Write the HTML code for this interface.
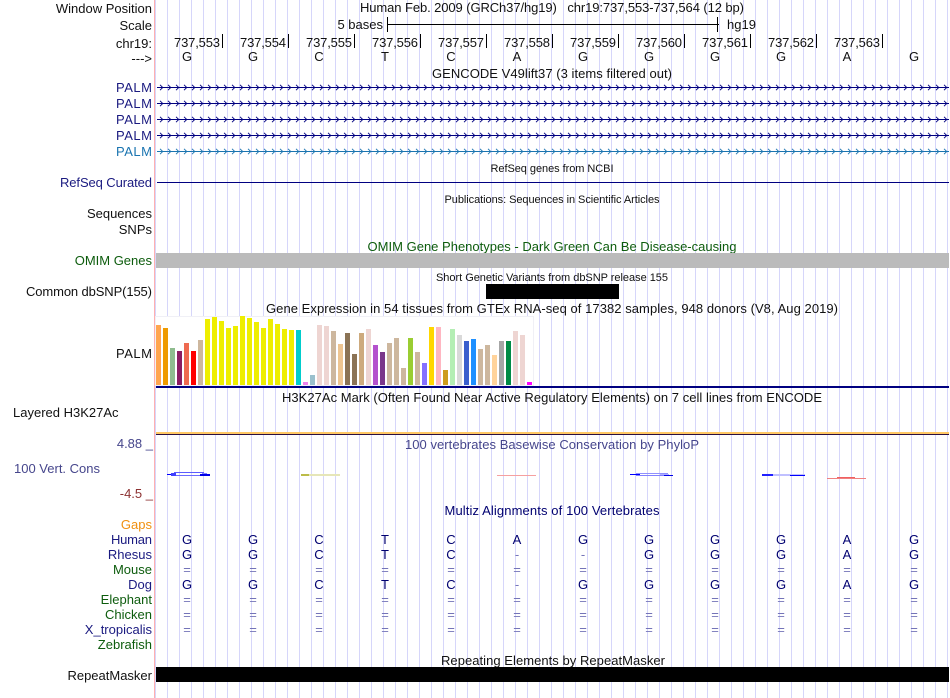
<!DOCTYPE html>
<html>
<head>
<meta charset="utf-8">
<title>Genome Browser</title>
<style>
html,body{margin:0;padding:0;background:#fff;}
body{width:950px;height:698px;overflow:hidden;}
svg{display:block;font-family:"Liberation Sans",sans-serif;font-size:13px;fill:#111;}
.l{text-anchor:end;}
.c{text-anchor:middle;}
.n{fill:#1a1a80;}
.g{fill:#0d5c0d;}
.s{font-size:11px;}
.b{fill:#000070;text-anchor:middle;}
.e{fill:#7474b8;text-anchor:middle;}
</style>
</head>
<body>
<svg width="950" height="698" viewBox="0 0 950 698" xmlns="http://www.w3.org/2000/svg">
<defs>
<pattern id="grid" x="167" y="0" width="12" height="698" patternUnits="userSpaceOnUse"><rect x="0" y="0" width="1" height="698" fill="#d6d6fa"/></pattern>
<pattern id="arr" x="157" y="84" width="8" height="7" patternUnits="userSpaceOnUse"><path d="M3 0.800 L5.800 3.500 L3 6.200" fill="none" stroke="#000080" stroke-width="0.900"/></pattern>
<pattern id="arr2" x="157" y="148" width="8" height="7" patternUnits="userSpaceOnUse"><path d="M3 0.800 L5.800 3.500 L3 6.200" fill="none" stroke="#1a74b0" stroke-width="0.900"/></pattern>
</defs>
<rect width="950" height="698" fill="#fff"/>
<rect x="155" y="0" width="795" height="698" fill="url(#grid)"/>
<rect x="154" y="0" width="1" height="698" fill="#ffb0b0"/>

<!-- left labels -->
<text x="152" y="13" class="l">Window Position</text>
<text x="152" y="30" class="l">Scale</text>
<text x="152" y="48" class="l">chr19:</text>
<text x="152" y="63" class="l">---&gt;</text>
<text x="152" y="92" class="l n" textLength="36">PALM</text>
<text x="152" y="108" class="l n" textLength="36">PALM</text>
<text x="152" y="124" class="l n" textLength="36">PALM</text>
<text x="152" y="140" class="l n" textLength="36">PALM</text>
<text x="152" y="156" class="l" style="fill:#1a74b0" textLength="36">PALM</text>
<text x="152" y="187" class="l n" textLength="92">RefSeq Curated</text>
<text x="152" y="218" class="l">Sequences</text>
<text x="152" y="234" class="l">SNPs</text>
<text x="152" y="265" class="l g">OMIM Genes</text>
<text x="152" y="296" class="l" textLength="126">Common dbSNP(155)</text>
<text x="152" y="358" class="l" textLength="36">PALM</text>
<text x="13" y="417">Layered H3K27Ac</text>
<text x="153" y="448" class="l" style="fill:#46468c">4.88 _</text>
<text x="14" y="473" style="fill:#46468c">100 Vert. Cons</text>
<text x="153" y="498" class="l" style="fill:#8c3232">-4.5 _</text>
<text x="152" y="529" class="l" style="fill:#f09010">Gaps</text>
<text x="152" y="544" class="l n" textLength="41">Human</text>
<text x="152" y="559" class="l n">Rhesus</text>
<text x="152" y="574" class="l g">Mouse</text>
<text x="152" y="589" class="l n">Dog</text>
<text x="152" y="604" class="l g">Elephant</text>
<text x="152" y="619" class="l g">Chicken</text>
<text x="152" y="634" class="l n">X_tropicalis</text>
<text x="152" y="649" class="l g">Zebrafish</text>
<text x="152" y="680" class="l">RepeatMasker</text>

<!-- header -->
<text x="552" y="12" class="c" textLength="384">Human Feb. 2009 (GRCh37/hg19) &#160; chr19:737,553-737,564 (12 bp)</text>
<text x="383" y="29" text-anchor="end">5 bases</text>
<rect x="387" y="24" width="332" height="1" fill="#000"/>
<rect x="387" y="17" width="1" height="15" fill="#000"/>
<rect x="717" y="17" width="1" height="15" fill="#000"/>
<text x="727" y="29">hg19</text>

<!-- ruler -->
<g text-anchor="end">
<text x="220" y="47" textLength="46">737,553</text><text x="286" y="47" textLength="46">737,554</text><text x="352" y="47" textLength="46">737,555</text><text x="418" y="47" textLength="46">737,556</text><text x="484" y="47" textLength="46">737,557</text><text x="550" y="47" textLength="46">737,558</text><text x="616" y="47" textLength="46">737,559</text><text x="682" y="47" textLength="46">737,560</text><text x="748" y="47" textLength="46">737,561</text><text x="814" y="47" textLength="46">737,562</text><text x="880" y="47" textLength="46">737,563</text>
</g>
<g fill="#000">
<rect x="222" y="34" width="1" height="14"/><rect x="288" y="34" width="1" height="14"/><rect x="354" y="34" width="1" height="14"/><rect x="420" y="34" width="1" height="14"/><rect x="486" y="34" width="1" height="14"/><rect x="552" y="34" width="1" height="14"/><rect x="618" y="34" width="1" height="14"/><rect x="684" y="34" width="1" height="14"/><rect x="750" y="34" width="1" height="14"/><rect x="816" y="34" width="1" height="14"/><rect x="882" y="34" width="1" height="14"/>
</g>
<g text-anchor="middle">
<text x="187" y="61">G</text><text x="253" y="61">G</text><text x="319" y="61">C</text><text x="385" y="61">T</text><text x="451" y="61">C</text><text x="517" y="61">A</text><text x="583" y="61">G</text><text x="649" y="61">G</text><text x="715" y="61">G</text><text x="781" y="61">G</text><text x="847" y="61">A</text><text x="914" y="61">G</text>
</g>

<!-- GENCODE -->
<text x="552" y="78" class="c" textLength="240">GENCODE V49lift37 (3 items filtered out)</text>
<g fill="#000080">
<rect x="157" y="87" width="792" height="1"/><rect x="157" y="103" width="792" height="1"/><rect x="157" y="119" width="792" height="1"/><rect x="157" y="135" width="792" height="1"/>
</g>
<rect x="157" y="151" width="792" height="1" fill="#1a74b0"/>
<g>
<rect x="157" y="84" width="792" height="7" fill="url(#arr)"/>
<g transform="translate(0,16)"><rect x="157" y="84" width="792" height="7" fill="url(#arr)"/></g>
<g transform="translate(0,32)"><rect x="157" y="84" width="792" height="7" fill="url(#arr)"/></g>
<g transform="translate(0,48)"><rect x="157" y="84" width="792" height="7" fill="url(#arr)"/></g>
<rect x="157" y="148" width="792" height="7" fill="url(#arr2)"/>
</g>

<!-- RefSeq etc -->
<text x="552" y="172" class="c s" textLength="123">RefSeq genes from NCBI</text>
<rect x="157" y="182" width="792" height="1" fill="#000080"/>
<text x="552" y="203" class="c s" textLength="215">Publications: Sequences in Scientific Articles</text>
<text x="552" y="251" class="c g" textLength="369">OMIM Gene Phenotypes - Dark Green Can Be Disease-causing</text>
<rect x="156" y="253" width="793" height="15" fill="#bbbbbb"/>
<text x="552" y="281" class="c s" textLength="232">Short Genetic Variants from dbSNP release 155</text>
<rect x="486" y="284" width="133" height="15" fill="#000"/>

<!-- GTEx -->
<text x="552" y="313" class="c" textLength="572">Gene Expression in 54 tissues from GTEx RNA-seq of 17382 samples, 948 donors (V8, Aug 2019)</text>
<rect x="155.500" y="316.500" width="378" height="69" fill="#fff" stroke="#f0f0f6"/>
<g>
<rect x="156" y="325" width="5" height="60" fill="#FFA54F"/>
<rect x="163" y="328" width="5" height="57" fill="#EE9A00"/>
<rect x="170" y="348" width="5" height="37" fill="#8FBC8F"/>
<rect x="177" y="351" width="5" height="34" fill="#8B1C62"/>
<rect x="184" y="343" width="5" height="42" fill="#EE6A50"/>
<rect x="191" y="351" width="5" height="34" fill="#FF0000"/>
<rect x="198" y="340" width="5" height="45" fill="#CDB79E"/>
<rect x="205" y="319" width="5" height="66" fill="#EEEE00"/>
<rect x="212" y="317" width="5" height="68" fill="#EEEE00"/>
<rect x="219" y="321" width="5" height="64" fill="#EEEE00"/>
<rect x="226" y="328" width="5" height="57" fill="#EEEE00"/>
<rect x="233" y="326" width="5" height="59" fill="#EEEE00"/>
<rect x="240" y="316" width="5" height="69" fill="#EEEE00"/>
<rect x="247" y="318" width="5" height="67" fill="#EEEE00"/>
<rect x="254" y="322" width="5" height="63" fill="#EEEE00"/>
<rect x="261" y="328" width="5" height="57" fill="#EEEE00"/>
<rect x="268" y="319" width="5" height="66" fill="#EEEE00"/>
<rect x="275" y="324" width="5" height="61" fill="#EEEE00"/>
<rect x="282" y="329" width="5" height="56" fill="#EEEE00"/>
<rect x="289" y="330" width="5" height="55" fill="#EEEE00"/>
<rect x="296" y="330" width="5" height="55" fill="#00CDCD"/>
<rect x="303" y="382" width="5" height="3" fill="#EE82EE"/>
<rect x="310" y="375" width="5" height="10" fill="#9AC0CD"/>
<rect x="317" y="325" width="5" height="60" fill="#EED5D2"/>
<rect x="324" y="326" width="5" height="59" fill="#EED5D2"/>
<rect x="331" y="331" width="5" height="54" fill="#CDB79E"/>
<rect x="338" y="344" width="5" height="41" fill="#EEC591"/>
<rect x="345" y="333" width="5" height="52" fill="#8B7355"/>
<rect x="352" y="354" width="5" height="31" fill="#8B7355"/>
<rect x="359" y="333" width="5" height="52" fill="#CDAA7D"/>
<rect x="366" y="329" width="5" height="56" fill="#EED5D2"/>
<rect x="373" y="345" width="5" height="40" fill="#B452CD"/>
<rect x="380" y="352" width="5" height="33" fill="#7A378B"/>
<rect x="387" y="343" width="5" height="42" fill="#CDB79E"/>
<rect x="394" y="338" width="5" height="47" fill="#CDB79E"/>
<rect x="401" y="368" width="5" height="17" fill="#CDB79E"/>
<rect x="408" y="338" width="5" height="47" fill="#9ACD32"/>
<rect x="415" y="352" width="5" height="33" fill="#CDB79E"/>
<rect x="422" y="363" width="5" height="22" fill="#8470FF"/>
<rect x="429" y="327" width="5" height="58" fill="#FFD700"/>
<rect x="436" y="327" width="5" height="58" fill="#FFB6C1"/>
<rect x="443" y="370" width="5" height="15" fill="#CD9B1D"/>
<rect x="450" y="329" width="5" height="56" fill="#B4EEB4"/>
<rect x="457" y="335" width="5" height="50" fill="#D9D9D9"/>
<rect x="464" y="341" width="5" height="44" fill="#3A5FCD"/>
<rect x="471" y="339" width="5" height="46" fill="#1E90FF"/>
<rect x="478" y="349" width="5" height="36" fill="#CDB79E"/>
<rect x="485" y="345" width="5" height="40" fill="#CDB79E"/>
<rect x="492" y="355" width="5" height="30" fill="#FFD39B"/>
<rect x="499" y="341" width="5" height="44" fill="#A6A6A6"/>
<rect x="506" y="341" width="5" height="44" fill="#008B45"/>
<rect x="513" y="331" width="5" height="54" fill="#EED5D2"/>
<rect x="520" y="335" width="5" height="50" fill="#EED5D2"/>
<rect x="527" y="382" width="5" height="3" fill="#FF00FF"/>
</g>
<rect x="156" y="386" width="793" height="2" fill="#000080"/>

<!-- H3K27Ac -->
<text x="552" y="402" class="c" textLength="540">H3K27Ac Mark (Often Found Near Active Regulatory Elements) on 7 cell lines from ENCODE</text>
<rect x="156" y="432" width="793" height="2" fill="#FFC864"/>
<rect x="156" y="434" width="793" height="1" fill="#2a1040"/>

<!-- Conservation -->
<text x="552" y="449" class="c" style="fill:#46468c" textLength="294">100 vertebrates Basewise Conservation by PhyloP</text>
<g>
<rect x="174" y="472" width="30" height="1" fill="#5c5cff"/>
<rect x="174" y="475" width="28" height="1" fill="#6c6cff"/>
<rect x="167" y="474" width="9" height="1" fill="#0000ff"/>
<rect x="171" y="473" width="5" height="3" fill="#4040ff"/>
<rect x="202" y="473" width="5" height="1" fill="#8080ff"/>
<rect x="200" y="474" width="10" height="2" fill="#0000e8"/>

<rect x="301" y="474" width="39" height="2" fill="#e6e6b8"/>
<rect x="301" y="474" width="8" height="2" fill="#bcbc48"/>

<rect x="497" y="475" width="39" height="1" fill="#f6a0a0"/>

<rect x="636" y="473" width="32" height="1" fill="#9090ff"/>
<rect x="636" y="475" width="30" height="1" fill="#8080ff"/>
<rect x="630" y="474" width="10" height="1" fill="#0000ff"/>
<rect x="660" y="474" width="9" height="1" fill="#b0b0ff"/>
<rect x="664" y="475" width="9" height="1" fill="#0000e8"/>

<rect x="762" y="474" width="43" height="2" fill="#c0c0ff"/>
<rect x="762" y="474" width="11" height="2" fill="#2020ff"/>
<rect x="790" y="475" width="15" height="1" fill="#0000ff"/>

<rect x="827" y="478" width="39" height="1" fill="#f08080"/>
<rect x="837" y="477" width="18" height="1" fill="#f06060"/>
</g>

<!-- Multiz -->
<text x="552" y="515" class="c" style="fill:#000070" textLength="215">Multiz Alignments of 100 Vertebrates</text>
<g class="rows">
<text x="187" y="544" class="b">G</text><text x="253" y="544" class="b">G</text><text x="319" y="544" class="b">C</text><text x="385" y="544" class="b">T</text><text x="451" y="544" class="b">C</text><text x="517" y="544" class="b">A</text><text x="583" y="544" class="b">G</text><text x="649" y="544" class="b">G</text><text x="715" y="544" class="b">G</text><text x="781" y="544" class="b">G</text><text x="847" y="544" class="b">A</text><text x="914" y="544" class="b">G</text>
<text x="187" y="559" class="b">G</text><text x="253" y="559" class="b">G</text><text x="319" y="559" class="b">C</text><text x="385" y="559" class="b">T</text><text x="451" y="559" class="b">C</text><text x="517" y="559" class="e">-</text><text x="583" y="559" class="e">-</text><text x="649" y="559" class="b">G</text><text x="715" y="559" class="b">G</text><text x="781" y="559" class="b">G</text><text x="847" y="559" class="b">A</text><text x="914" y="559" class="b">G</text>
<text x="187" y="574" class="e">=</text><text x="253" y="574" class="e">=</text><text x="319" y="574" class="e">=</text><text x="385" y="574" class="e">=</text><text x="451" y="574" class="e">=</text><text x="517" y="574" class="e">=</text><text x="583" y="574" class="e">=</text><text x="649" y="574" class="e">=</text><text x="715" y="574" class="e">=</text><text x="781" y="574" class="e">=</text><text x="847" y="574" class="e">=</text><text x="914" y="574" class="e">=</text>
<text x="187" y="589" class="b">G</text><text x="253" y="589" class="b">G</text><text x="319" y="589" class="b">C</text><text x="385" y="589" class="b">T</text><text x="451" y="589" class="b">C</text><text x="517" y="589" class="e">-</text><text x="583" y="589" class="b">G</text><text x="649" y="589" class="b">G</text><text x="715" y="589" class="b">G</text><text x="781" y="589" class="b">G</text><text x="847" y="589" class="b">A</text><text x="914" y="589" class="b">G</text>
<text x="187" y="604" class="e">=</text><text x="253" y="604" class="e">=</text><text x="319" y="604" class="e">=</text><text x="385" y="604" class="e">=</text><text x="451" y="604" class="e">=</text><text x="517" y="604" class="e">=</text><text x="583" y="604" class="e">=</text><text x="649" y="604" class="e">=</text><text x="715" y="604" class="e">=</text><text x="781" y="604" class="e">=</text><text x="847" y="604" class="e">=</text><text x="914" y="604" class="e">=</text>
<text x="187" y="619" class="e">=</text><text x="253" y="619" class="e">=</text><text x="319" y="619" class="e">=</text><text x="385" y="619" class="e">=</text><text x="451" y="619" class="e">=</text><text x="517" y="619" class="e">=</text><text x="583" y="619" class="e">=</text><text x="649" y="619" class="e">=</text><text x="715" y="619" class="e">=</text><text x="781" y="619" class="e">=</text><text x="847" y="619" class="e">=</text><text x="914" y="619" class="e">=</text>
<text x="187" y="634" class="e">=</text><text x="253" y="634" class="e">=</text><text x="319" y="634" class="e">=</text><text x="385" y="634" class="e">=</text><text x="451" y="634" class="e">=</text><text x="517" y="634" class="e">=</text><text x="583" y="634" class="e">=</text><text x="649" y="634" class="e">=</text><text x="715" y="634" class="e">=</text><text x="781" y="634" class="e">=</text><text x="847" y="634" class="e">=</text><text x="914" y="634" class="e">=</text>
</g>

<!-- RepeatMasker -->
<text x="553" y="665" class="c" textLength="224">Repeating Elements by RepeatMasker</text>
<rect x="156" y="667" width="793" height="15" fill="#000"/>
</svg>
</body>
</html>
